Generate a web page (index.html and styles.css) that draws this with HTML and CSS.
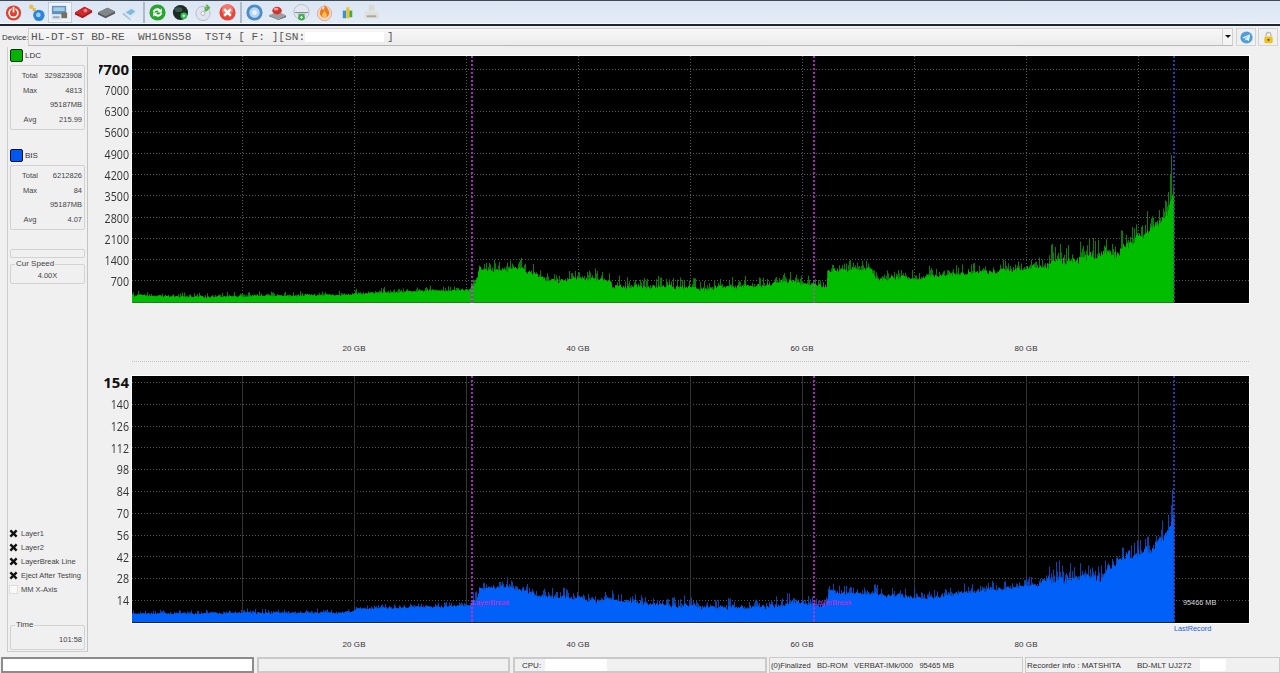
FILE: index.html
```html
<!DOCTYPE html>
<html lang="en">
<head>
<meta charset="utf-8">
<title>Disc quality</title>
<link rel="stylesheet" href="styles.css">
</head>
<body>
<svg class="defs" width="0" height="0" aria-hidden="true">
  <symbol id="x-mark" viewBox="0 0 10 10"><path d="M1.500 1.500 8.500 8.500M8.500 1.500 1.500 8.500" stroke="#111" stroke-width="2.600" fill="none"/></symbol>
</svg>
<header class="toolbar">
  <button class="tb"><svg viewBox="0 0 20 20"><circle cx="10" cy="10.500" r="8" fill="#e2402c"/><circle cx="10" cy="10.500" r="4.600" fill="none" stroke="#fff" stroke-width="1.800"/><path d="M10 3.500v6" stroke="#e2402c" stroke-width="4"/><path d="M10 4v6" stroke="#fff" stroke-width="1.800"/></svg></button>
  <button class="tb"><svg viewBox="0 0 20 20"><circle cx="4.500" cy="4" r="2.400" fill="#e9c04a"/><circle cx="7.500" cy="7" r="1.900" fill="#e6b93e"/><circle cx="12.500" cy="13" r="6" fill="#2b86d8"/><circle cx="12" cy="12.500" r="2.400" fill="#9fd0f4"/></svg></button>
  <button class="tb tb-on"><svg viewBox="0 0 20 20"><rect x="2" y="3" width="15" height="9" fill="#5f93bd"/><rect x="3.500" y="4.500" width="12" height="4" fill="#a5cde6"/><rect x="1" y="12" width="11" height="6" fill="#dfe6ec"/><rect x="12" y="10" width="6" height="6" fill="#77705c"/><rect x="3" y="14" width="7" height="2" fill="#8fa7b8"/></svg></button>
  <button class="tb"><svg viewBox="0 0 20 20"><path d="M1 10 11 4l8 4v2L9 16 1 12Z" fill="#a81a1e"/><path d="M1 10 9 14 19 8 11 4Z" fill="#cf2a2c"/><circle cx="12" cy="8" r="2" fill="#e98a8a"/></svg></button>
  <button class="tb"><svg viewBox="0 0 20 20"><path d="M1 10 11 5l8 4v2L9 16 1 12Z" fill="#55595c"/><path d="M1 10 9 14 19 9 11 5Z" fill="#80868a"/></svg></button>
  <button class="tb"><svg viewBox="0 0 20 20"><path d="M2 10 11 3l7 6-8 8Z" fill="#d7e7f3"/><path d="M5 10 11 6l4 3-5 4Z" fill="#86b8de"/><path d="M2 10l8 7v1.500L2 12Z" fill="#a3b8c8"/></svg></button>
  <span class="sep"></span>
  <button class="tb"><svg viewBox="0 0 20 20"><circle cx="10" cy="10" r="8.500" fill="#27a52f"/><path d="M5 9c1-3 5-5 8-2l1.500-1.500V10H10l1.500-1.500C9.500 7 7 8 6.500 10ZM15 11c-1 3-5 5-8 2l-1.500 1.500V10H10l-1.500 1.500c2 1.500 4.500.5 5-1.500Z" fill="#fff"/></svg></button>
  <button class="tb"><svg viewBox="0 0 20 20"><circle cx="10" cy="10" r="8" fill="#1c2b26"/><ellipse cx="8" cy="7" rx="4" ry="2.500" fill="#3e5a50"/><circle cx="13.500" cy="13.500" r="3.500" fill="#26c04a"/><path d="M12 13.500h3M13.500 12v3" stroke="#fff"/></svg></button>
  <button class="tb"><svg viewBox="0 0 20 20"><circle cx="9.500" cy="11" r="7.500" fill="#dfe4ee"/><circle cx="9.500" cy="11" r="7.500" fill="none" stroke="#b4bccb"/><circle cx="9.500" cy="11" r="2" fill="#fff" stroke="#a8b0bf"/><path d="M13 2l3 3-3 3M16 5h-4v4" stroke="#5cb04a" stroke-width="1.800" fill="none"/></svg></button>
  <button class="tb"><svg viewBox="0 0 20 20"><circle cx="10" cy="10" r="8.500" fill="#e8453a"/><circle cx="10" cy="7" r="6" fill="#f3776c"/><path d="M6.500 6.500l7 7M13.500 6.500l-7 7" stroke="#fff" stroke-width="2.600"/></svg></button>
  <span class="sep"></span>
  <button class="tb"><svg viewBox="0 0 20 20"><circle cx="10" cy="10" r="8.500" fill="#4a8dcb"/><circle cx="10" cy="10" r="5.500" fill="#b9d6ee"/><circle cx="10" cy="10" r="2.500" fill="#eaf3fb"/></svg></button>
  <button class="tb"><svg viewBox="0 0 20 20"><path d="M1 13 10 9l9 4-8 4Z" fill="#9a9fa2"/><path d="M1 13l10 4 8-4v2l-8 3-10-4Z" fill="#6e7376"/><ellipse cx="9.500" cy="8" rx="5" ry="4" fill="#d5322e"/><ellipse cx="8.500" cy="6.500" rx="2.500" ry="1.500" fill="#f4a09a"/></svg></button>
  <button class="tb"><svg viewBox="0 0 20 20"><circle cx="10" cy="9.500" r="8" fill="#e3e8ef" stroke="#b5bdc8"/><path d="M3 10h14" stroke="#7b8896"/><path d="M6 11h8v2H6Z" fill="#a9b3bd"/><circle cx="10" cy="15" r="3.500" fill="#3cab4a"/><path d="M8.500 15h3M10 13.500v3" stroke="#fff"/></svg></button>
  <button class="tb"><svg viewBox="0 0 20 20"><circle cx="10" cy="11" r="7.500" fill="#f4d8c8" stroke="#d9a98f"/><path d="M10 1c1 3 5 5 5 9.500a5 5 0 0 1-10 0C5 8 6.500 7 7 5c1 1 1.500 2 1.500 3C10 6 10.500 4 10 1Z" fill="#ee7a26"/><path d="M10 8c.5 2 2.500 3 2.500 5a2.500 2.500 0 0 1-5 0c0-2 2-3 2.500-5Z" fill="#f9c542"/></svg></button>
  <button class="tb"><svg viewBox="0 0 20 20"><path d="M5 8h3.500v8H5Z" fill="#3a93d8"/><path d="M8.500 5l3.500-1v12H8.500Z" fill="#e9c32e"/><path d="M12 8h3v7h-3Z" fill="#46a84a"/></svg></button>
  <button class="tb"><svg viewBox="0 0 20 20"><rect x="7" y="2" width="6" height="6" fill="#d9d9d4"/><path d="M3 9h14l1 7H2Z" fill="#e0e0da"/><rect x="5" y="13" width="10" height="2" fill="#a8a8a2"/></svg></button>
</header>

<div class="device-row">
  <span class="device-label">Device:</span>
  <div class="device-box">
    <span class="device-text">HL-DT-ST BD-RE  WH16NS58  TST4 [ F: ][SN:</span><span class="redact device-sn"></span><span class="device-text">]</span>
    <span class="combo-arrow"></span>
  </div>
  <button class="side-btn"><svg viewBox="0 0 16 16"><circle cx="8" cy="8" r="6.500" fill="#4d9fd6"/><path d="M3.500 8 12 4.500 10.500 12 8 10l-1.500 1.500V9.500L10.500 6 5.500 9Z" fill="#e6f2fa"/></svg></button>
  <button class="side-btn"><svg viewBox="0 0 16 16"><path d="M5.500 7V5a2.500 2.500 0 0 1 5 0v2" fill="none" stroke="#b9b9b0" stroke-width="1.400"/><rect x="3.500" y="7" width="9" height="7" rx="1.500" fill="#eec320"/><circle cx="8" cy="10.500" r="1.200" fill="#5c4a08"/></svg></button>
</div>

<main class="main">
  <aside class="sidebar">
    <div class="legend"><span class="swatch swatch-green"></span><span>LDC</span></div>
    <div class="stats">
      <div class="stat"><span class="stat-key">Total</span><span>329823908</span></div>
      <div class="stat"><span class="stat-key">Max</span><span>4813</span></div>
      <div class="stat"><span class="stat-key"></span><span>95187MB</span></div>
      <div class="stat"><span class="stat-key">Avg</span><span>215.99</span></div>
    </div>
    <div class="legend legend-bis"><span class="swatch swatch-blue"></span><span>BIS</span></div>
    <div class="stats">
      <div class="stat"><span class="stat-key">Total</span><span>6212826</span></div>
      <div class="stat"><span class="stat-key">Max</span><span>84</span></div>
      <div class="stat"><span class="stat-key"></span><span>95187MB</span></div>
      <div class="stat"><span class="stat-key">Avg</span><span>4.07</span></div>
    </div>
    <div class="blank-box"></div>
    <fieldset class="group group-speed"><legend>Cur Speed</legend><div class="speed-value">4.00X</div></fieldset>
    <ul class="checks">
      <li><span class="check"><svg viewBox="0 0 10 10"><use href="#x-mark"/></svg></span>Layer1</li>
      <li><span class="check"><svg viewBox="0 0 10 10"><use href="#x-mark"/></svg></span>Layer2</li>
      <li><span class="check"><svg viewBox="0 0 10 10"><use href="#x-mark"/></svg></span>LayerBreak Line</li>
      <li><span class="check"><svg viewBox="0 0 10 10"><use href="#x-mark"/></svg></span>Eject After Testing</li>
      <li><span class="check check-empty"></span>MM X-Axis</li>
    </ul>
    <fieldset class="group group-time"><legend>Time</legend><div class="time-value">101:58</div></fieldset>
  </aside>

  <section class="charts">
    <div class="chart">
      <div class="yaxis yaxis-top">
        <span class="tick tick-max">7700</span><span class="tick">7000</span><span class="tick">6300</span><span class="tick">5600</span><span class="tick">4900</span><span class="tick">4200</span><span class="tick">3500</span><span class="tick">2800</span><span class="tick">2100</span><span class="tick">1400</span><span class="tick">700</span>
      </div>
      <div class="plot"><svg id="plot-ldc" class="plot-svg" width="1117" height="247" viewBox="0 0 1117 247"></svg></div>
    </div>
    <div class="xaxis xaxis-top"><span>20 GB</span><span>40 GB</span><span>60 GB</span><span>80 GB</span></div>
    <div class="chart">
      <div class="yaxis yaxis-bottom">
        <span class="tick tick-max">154</span><span class="tick">140</span><span class="tick">126</span><span class="tick">112</span><span class="tick">98</span><span class="tick">84</span><span class="tick">70</span><span class="tick">56</span><span class="tick">42</span><span class="tick">28</span><span class="tick">14</span>
      </div>
      <div class="plot">
        <svg id="plot-bis" class="plot-svg" width="1117" height="247" viewBox="0 0 1117 247"></svg>
        <span class="note note-break note-break-a">LayerBreak</span>
        <span class="note note-break note-break-b">LayerBreak</span>
        <span class="note note-size">95466 MB</span>
        <span class="note note-last">LastRecord</span>
      </div>
    </div>
    <div class="xaxis xaxis-bottom"><span>20 GB</span><span>40 GB</span><span>60 GB</span><span>80 GB</span></div>
  </section>
</main>

<footer class="status">
  <div class="cell cell-white"></div>
  <div class="cell"></div>
  <div class="cell cell-cpu"><span>CPU:</span><span class="redact cpu-redact"></span></div>
  <div class="cell cell-disc">(0)Finalized&nbsp;&nbsp; BD-ROM&nbsp;&nbsp; VERBAT-IMk/000&nbsp;&nbsp; 95465 MB</div>
  <div class="cell cell-rec"><span>Recorder info : MATSHITA</span><span class="rec-model">BD-MLT UJ272</span><span class="redact rec-redact"></span></div>
</footer>
<script src="chart.js"></script>
</body>
</html>
```
FILE: styles.css
```css
* { box-sizing: border-box; }
html, body { margin: 0; height: 100%; }
body {
  width: 1280px;
  height: 673px;
  overflow: hidden;
  display: flex;
  flex-direction: column;
  background: #f0f0f0;
  color: #444;
  font: 7.500px "Liberation Sans", Arial, sans-serif;
}
.defs { position: absolute; }

.toolbar {
  flex: none;
  height: 26px;
  display: flex;
  align-items: center;
  padding: 0 0 1px 1.500px;
  background: linear-gradient(#dbe5f3, #e4ecf7);
  border-top: 1px solid #3c4a54;
  border-bottom: 2px solid #1d2730;
  box-shadow: inset 0 -1px 0 #f6f9fd;
}
.tb {
  flex: none;
  width: 23.400px;
  height: 21px;
  padding: 1px 0 0;
  border: 1px solid transparent;
  background: none;
  display: flex;
  align-items: center;
  justify-content: center;
}
.tb svg { width: 19px; height: 19px; display: block; filter: blur(.4px); }
.tb-on { background: #eef3fa; border-color: #c2cedd; }
.sep { flex: none; width: 3.600px; height: 21px; display: flex; justify-content: center; }
.sep::before { content: ""; width: 2px; background: #aebbcb; }

.device-row {
  flex: none;
  height: 21px;
  display: flex;
  align-items: center;
  padding: 1px 2px 0 2px;
}
.device-label { width: 26px; font-size: 8px; color: #333; }
.device-box {
  width: 1206px;
  height: 18px;
  display: flex;
  align-items: center;
  padding-left: 2px;
  background: linear-gradient(#f7f7f7, #ececec);
  border: 1px solid #d0d0d0;
  border-bottom-color: #b8b8b8;
  position: relative;
}
.device-text { font: 11.150px "Liberation Mono", "Courier New", monospace; color: #555; white-space: pre; }
.device-sn { width: 79px; height: 10px; margin-right: 3px; }
.redact { display: inline-block; background: #fff; }
.combo-arrow {
  position: absolute;
  right: 0;
  top: 0;
  bottom: 0;
  width: 10px;
  border-left: 1px solid #d4d4d4;
  background: #f4f4f4;
}
.combo-arrow::after {
  content: "";
  position: absolute;
  left: 2px;
  top: 6px;
  border: 3px solid transparent;
  border-top: 3px solid #111;
  border-bottom: 0;
}
.side-btn {
  flex: none;
  width: 20px;
  height: 18px;
  padding: 0;
  margin-left: 2px;
  background: #eef0f2;
  border: 1px solid #d4d4d4;
  display: flex;
  align-items: center;
  justify-content: center;
}
.side-btn:first-of-type { margin-left: 3px; }
.side-btn svg { width: 15px; height: 15px; filter: blur(.3px); }

.main { flex: none; height: 610px; display: flex; padding-left: 7px; }
.sidebar {
  flex: none;
  width: 81px;
  height: 605px;
  padding: 2px 2px 0 2px;
  border-left: 1px solid #cdcdcd;
  border-right: 1px solid #c4c4c4;
  border-bottom: 1px solid #cdcdcd;
  display: flex;
  flex-direction: column;
}
.legend { display: flex; align-items: center; gap: 2px; height: 13px; color: #333; font-size: 8px; }
.legend-bis { margin-top: 19px; }
.swatch { width: 13px; height: 13px; border: 1px solid #0b2a0b; border-radius: 2px; }
.swatch-green { background: #00b400; }
.swatch-blue { background: #0058f0; border-color: #06102e; }
.stats {
  margin-top: 3px;
  height: 65px;
  padding: 2px 2px 0 4px;
  border: 1px solid #d2d2d2;
  border-radius: 2px;
  display: flex;
  flex-direction: column;
}
.stat { height: 14.700px; display: flex; justify-content: space-between; align-items: center; }
.stat-key { width: 30px; text-align: center; }
.blank-box {
  margin-top: 19px;
  height: 9px;
  border: 1px solid #d2d2d2;
  border-radius: 2px;
}
.group { margin: 0; padding: 0; border: 1px solid #d2d2d2; border-radius: 2px; min-width: 0; }
.group legend { padding: 0 1px; margin-left: 4px; line-height: 8px; font-size: 8px; color: #444; }
.group-speed { margin-top: 2px; height: 24px; }
.speed-value { text-align: center; line-height: 15px; }
.checks { list-style: none; margin: 242px 0 0 -1px; padding: 0; }
.checks li { height: 14px; display: flex; align-items: center; gap: 3px; }
.check { width: 9px; height: 9px; display: block; }
.check svg { width: 9px; height: 9px; display: block; }
.check-empty { background: #f8f8f8; border: 1px solid #dedede; }
.group-time { margin-top: 25px; height: 29px; }
.time-value { text-align: right; padding-right: 2px; line-height: 22px; }

.charts { flex: none; width: 1192px; height: 600px; padding-top: 9px; overflow: hidden; }
.chart { display: flex; margin-left: 11px; }
.yaxis {
  flex: none;
  width: 33px;
  height: 247px;
  display: flex;
  flex-direction: column;
  overflow-x: clip;
  padding-right: 3px;
  color: #333;
  font: 13px "Open Sans", sans-serif;
}
.yaxis-top { padding-top: 6.700px; gap: 9.270px; }
.yaxis-bottom { padding-top: .2px; gap: 9.800px; }
.tick {
  flex: none;
  height: 12px;
  line-height: 12px;
  display: flex;
  justify-content: flex-end;
  transform: scaleX(.82);
  transform-origin: right center;
}
.tick-max { font-weight: 700; font-size: 15px; color: #111; transform: none; }
.plot {
  position: relative;
  flex: none;
  width: 1117px;
  height: 247px;
  background: #000;
  box-shadow: 0 0 0 1px #fff;
}
.plot-svg { display: block; }
.note { position: absolute; font-size: 7.300px; white-space: nowrap; line-height: 10px; }
.note-break { top: 222px; color: #d028d8; }
.note-break-a { left: 340px; }
.note-break-b { left: 682px; }
.note-size { left: 1051px; top: 222px; color: #d8d8d8; }
.note-last { left: 1042px; top: 248px; color: #1f5fd0; }

.xaxis { display: flex; margin-left: 154px; color: #333; font-size: 8px; line-height: 12px; letter-spacing: .1px; }
.xaxis span { flex: none; width: 224px; text-align: center; }
.xaxis-top {
  height: 59px;
  padding-top: 40px;
  margin-bottom: 14px;
  border-bottom: 1px dotted #c4c4c4;
  width: 1117px;
  margin-left: 44px;
  padding-left: 110px;
}
.xaxis-bottom { padding-top: 16px; }

.status { flex: none; height: 16px; display: flex; gap: 3px; padding-left: 1px; }
.cell {
  flex: none;
  width: 253px;
  height: 16px;
  padding: 0 3px;
  display: flex;
  align-items: center;
  border: 2px solid #cacaca;
  background: #f0f0f0;
  font-size: 8px;
  color: #333;
  white-space: nowrap;
}
.cell-white { background: #fff; border-color: #8c8c8c; }
.cell-cpu { width: 254px; padding-left: 7px; }
.cpu-redact { width: 62px; height: 12px; margin-left: 4px; }
.cell-disc { width: 254px; margin-left: -1px; padding: 0 1px; border-width: 1px; font-size: 7.600px; }
.cell-rec { width: 255px; margin-left: -1px; padding: 0 1px; border-width: 1px; }
.rec-model { margin-left: 16px; }
.rec-redact { width: 26px; height: 12px; margin-left: 9px; }
```
FILE: chart.js
```js
// Draws the two scan plots: grid, jagged measurement fill and marker lines.
(function () {
  var NS = "http://www.w3.org/2000/svg";
  var OX = 132, W = 1117, H = 247;
  var GRID_X = [242, 354, 466, 578, 690, 802, 914, 1026, 1138];

  function rng(seed) {
    return function () {
      seed = (seed + 0x6D2B79F5) | 0;
      var t = Math.imul(seed ^ (seed >>> 15), 1 | seed);
      t = (t + Math.imul(t ^ (t >>> 7), 61 | t)) ^ t;
      return ((t ^ (t >>> 14)) >>> 0) / 4294967296;
    };
  }
  function add(svg, tag, attrs) {
    var el = document.createElementNS(NS, tag);
    for (var k in attrs) el.setAttribute(k, attrs[k]);
    svg.appendChild(el);
    return el;
  }
  function lerp(env, x) {
    for (var i = 1; i < env.length; i++) {
      if (x <= env[i][0]) {
        var a = env[i - 1], b = env[i];
        return a[1] + (b[1] - a[1]) * (x - a[0]) / (b[0] - a[0]);
      }
    }
    return env[env.length - 1][1];
  }
  function amp(x) {
    if (x < 470) return .45;
    if (x > 1045) return 2;
    return 1;
  }
  function draw(cfg) {
    var svg = document.getElementById(cfg.id), r = rng(cfg.seed);
    cfg.rows.forEach(function (y) {
      add(svg, "line", { x1: 0, x2: W, y1: y + .5, y2: y + .5, stroke: cfg.hGrid, "stroke-dasharray": "1 2" });
    });
    GRID_X.forEach(function (x) {
      add(svg, "line", { x1: x - OX + .5, x2: x - OX + .5, y1: 0, y2: H, stroke: cfg.vGrid, "stroke-dasharray": cfg.vDash });
    });
    var front = [], back = [], wave = 0;
    for (var x = OX; x < cfg.end; x++) {
      var a = amp(x);
      var base = lerp(cfg.env, x) - cfg.top;
      wave = wave * .75 + (r() - .5) * cfg.wave * a;
      var y = base + wave + r() * cfg.jag * a;
      var peak = y - Math.pow(r(), 3) * cfg.spike * a;
      (cfg.peaks || []).forEach(function (p) { if (p[0] === x) peak = p[1] - cfg.top; });
      front.push((x - OX) + "," + y.toFixed(1), (x - OX + 1) + "," + y.toFixed(1));
      back.push((x - OX) + "," + peak.toFixed(1), (x - OX + 1) + "," + peak.toFixed(1));
    }
    var endX = cfg.end - OX;
    add(svg, "polygon", { points: "0," + H + " " + back.join(" ") + " " + endX + "," + H, fill: cfg.dark });
    add(svg, "polygon", { points: "0," + H + " " + front.join(" ") + " " + endX + "," + H, fill: cfg.fill });
    add(svg, "rect", { x: 0, y: H - 1, width: endX, height: 1, fill: cfg.base });

    function marker(x, color, under, from) {
      add(svg, "line", { x1: x - OX, x2: x - OX, y1: 0, y2: H, stroke: color, "stroke-width": 2, "stroke-dasharray": "2 2" });
      add(svg, "line", { x1: x - OX, x2: x - OX, y1: from, y2: H, stroke: under, "stroke-width": 2, "stroke-dasharray": "2 2" });
    }
    marker(472, "#b21fc4", cfg.under, lerp(cfg.env, 472) - cfg.top);
    marker(814, "#b21fc4", cfg.under, lerp(cfg.env, 814) - cfg.top);
    marker(1174, "#1c3fb4", cfg.lastUnder, lerp(cfg.env, 1172) - cfg.top);
  }

  draw({
    id: "plot-ldc", seed: 77, top: 56, end: 1174,
    rows: [13, 33, 55, 76, 97, 118, 139, 161, 182, 203, 224],
    hGrid: "#5a5a5a", vGrid: "#5a5a5a", vDash: "1 2",
    fill: "#00bd00", dark: "#0b7d0b", base: "#1f7f1f",
    under: "#7d7d7d", lastUnder: "#1a6a60",
    wave: 2.2, jag: 3, spike: 10,
    peaks: [[1171, 155], [1170, 175]],
    env: [[132, 295], [200, 296], [350, 294], [400, 291], [470, 289], [476, 281], [479, 267], [520, 268], [535, 272], [547, 279], [610, 277], [612, 284], [700, 286], [760, 285], [790, 279], [810, 284], [826, 285], [828, 269], [870, 267], [875, 277], [920, 276], [1000, 269], [1045, 265], [1050, 258], [1100, 252], [1120, 247], [1140, 235], [1155, 227], [1168, 208], [1172, 192]]
  });
  draw({
    id: "plot-bis", seed: 21, top: 376, end: 1174,
    rows: [6, 28, 50, 71, 93, 115, 137, 159, 180, 202, 224],
    hGrid: "#555", vGrid: "#333", vDash: "none",
    fill: "#0060f8", dark: "#0a45b4", base: "#06205e",
    under: "#7a52dc", lastUnder: "#1c50d8",
    wave: 2, jag: 3, spike: 9,
    peaks: [[1172, 490], [1171, 505]],
    env: [[132, 613], [350, 612], [355, 608], [470, 605], [476, 598], [479, 586], [525, 587], [540, 595], [610, 599], [700, 606], [780, 605], [790, 600], [812, 603], [826, 604], [829, 590], [870, 592], [920, 597], [1000, 587], [1040, 583], [1052, 576], [1100, 574], [1120, 556], [1150, 546], [1168, 530], [1172, 515]]
  });
})();
```
